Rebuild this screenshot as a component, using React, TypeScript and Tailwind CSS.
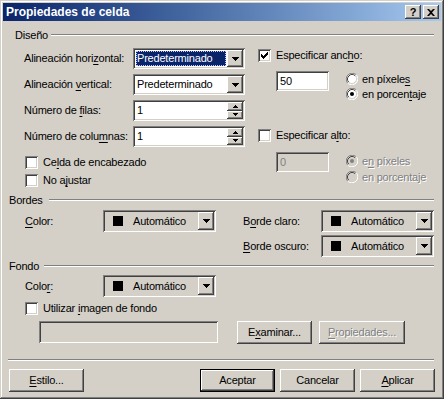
import React from "react";

const raised =
  "shadow-[inset_-1px_-1px_0_#404040,inset_1px_1px_0_#ffffff,inset_-2px_-2px_0_#808080,inset_2px_2px_0_#d4d0c8]";
const sunken =
  "shadow-[inset_1px_1px_0_#808080,inset_-1px_-1px_0_#ffffff,inset_2px_2px_0_#404040,inset_-2px_-2px_0_#d4d0c8]";
const dim = "text-[#808080] [text-shadow:1px_1px_0_#ffffff]";

const U: React.FC<{ children: React.ReactNode }> = ({ children }) => (
  <u className="underline underline-offset-[2px] decoration-1">{children}</u>
);

const ArrowBtn = () => (
  <div className={`w-[16px] h-full flex items-center justify-center bg-[#d4d0c8] ${raised}`}>
    <svg width="7" height="4" viewBox="0 0 7 4">
      <path d="M0 0h7v1H0zM1 1h5v1H1zM2 2h3v1H2zM3 3h1v1H3z" fill="#000" />
    </svg>
  </div>
);

const Select: React.FC<{ value: string; focused?: boolean }> = ({ value, focused }) => (
  <div className={`w-[112px] h-[21px] bg-white p-[2px] flex ${sunken}`}>
    <div
      className={`flex-1 flex items-center m-[1px] pl-[1px] ${
        focused ? "bg-[#0a246a] text-white outline-1 outline-dotted outline-[#c8c8ff] -outline-offset-1" : ""
      }`}
    >
      {value}
    </div>
    <ArrowBtn />
  </div>
);

const SpinArrow: React.FC<{ up?: boolean }> = ({ up }) => (
  <div className={`flex-1 flex items-center justify-center bg-[#d4d0c8] ${raised}`}>
    <svg width="5" height="3" viewBox="0 0 5 3">
      {up ? (
        <path d="M2 0h1v1H2zM1 1h3v1H1zM0 2h5v1H0z" fill="#000" />
      ) : (
        <path d="M0 0h5v1H0zM1 1h3v1H1zM2 2h1v1H2z" fill="#000" />
      )}
    </svg>
  </div>
);

const Spin: React.FC<{ value: string }> = ({ value }) => (
  <div className={`w-[112px] h-[21px] bg-white p-[2px] flex ${sunken}`}>
    <div className="flex-1 flex items-center pl-[2px]">{value}</div>
    <div className="w-[16px] flex flex-col">
      <SpinArrow up />
      <SpinArrow />
    </div>
  </div>
);

const ColorSelect = () => (
  <div className={`w-[113px] h-[22px] bg-[#d4d0c8] p-[2px] flex ${sunken}`}>
    <div className="flex-1 flex items-center">
      <div className="w-[10px] h-[10px] bg-black ml-[8px]" />
      <span className="ml-[10px]">Automático</span>
    </div>
    <ArrowBtn />
  </div>
);

const Check: React.FC<{ checked?: boolean }> = ({ checked }) => (
  <div className={`w-[13px] h-[13px] shrink-0 bg-white flex items-center justify-center ${sunken}`}>
    {checked && (
      <svg width="7" height="7" viewBox="0 0 7 7">
        <path d="M6 0h1v3H6zM5 1h1v3H5zM4 2h1v3H4zM3 3h1v3H3zM2 4h1v3H2zM1 3h1v3H1zM0 2h1v3H0z" fill="#000" />
      </svg>
    )}
  </div>
);

const Radio: React.FC<{ on?: boolean; disabled?: boolean }> = ({ on, disabled }) => (
  <svg width="12" height="12" viewBox="0 0 12 12" className="shrink-0">
    <circle cx="6" cy="6" r="5" fill={disabled ? "#d4d0c8" : "#ffffff"} />
    <path d="M1.76 10.24A6 6 0 0 1 10.24 1.76" stroke="#808080" strokeWidth="1" fill="none" transform="translate(0 0)" />
    <path d="M10.24 1.76A6 6 0 0 1 1.76 10.24" stroke="#ffffff" strokeWidth="1" fill="none" />
    <path d="M2.82 9.18A4.5 4.5 0 0 1 9.18 2.82" stroke="#404040" strokeWidth="1" fill="none" />
    <path d="M9.18 2.82A4.5 4.5 0 0 1 2.82 9.18" stroke="#d4d0c8" strokeWidth="1" fill="none" />
    {on && <circle cx="6" cy="6" r="2" fill={disabled ? "#808080" : "#000000"} />}
  </svg>
);

const Btn: React.FC<{ children: React.ReactNode; className?: string; def?: boolean; disabled?: boolean }> = ({
  children,
  className,
  def,
  disabled,
}) => (
  <div
    className={`h-[23px] flex items-center justify-center bg-[#d4d0c8] ${
      def ? "border border-black" : ""
    } ${raised} ${disabled ? dim : ""} ${className ?? ""}`}
  >
    {children}
  </div>
);

const GroupHead: React.FC<{ label: string; pad: string; gap: string }> = ({ label, pad, gap }) => (
  <div className={`h-[14px] flex items-center pr-[7px] ${pad}`}>
    <span>{label}</span>
    <div className={`flex-1 border-t border-b border-t-[#808080] border-b-white ${gap}`} />
  </div>
);

export default function App() {
  return (
    <div
      className={`w-[444px] h-[399px] bg-[#d4d0c8] p-[3px] flex flex-col font-['Liberation_Sans',Arial,sans-serif] text-[11px] tracking-[-0.2px] leading-none text-black select-none shadow-[inset_-1px_-1px_0_#404040,inset_1px_1px_0_#d4d0c8,inset_-2px_-2px_0_#808080,inset_2px_2px_0_#ffffff]`}
    >
      {/* title bar */}
      <div className="h-[18px] flex items-center justify-between pl-[3px] pr-[2px] bg-linear-to-r from-[#0a246a] to-[#a6caf0]">
        <span className="text-white font-bold text-[12px] tracking-normal">Propiedades de celda</span>
        <div className="flex gap-[2px]">
          <div className={`w-[16px] h-[14px] flex items-center justify-center bg-[#d4d0c8] font-bold text-[11px] ${raised}`}>
            ?
          </div>
          <div className={`w-[16px] h-[14px] flex items-center justify-center bg-[#d4d0c8] ${raised}`}>
            <svg width="8" height="7" viewBox="0 0 8 7">
              <path d="M0 0h2l2 2 2-2h2L5 3.5 8 7H6L4 5 2 7H0l3-3.5z" fill="#000" />
            </svg>
          </div>
        </div>
      </div>

      {/* Diseño */}
      <div className="mt-[7px]">
        <GroupHead label="Diseño" pad="pl-[12px]" gap="ml-[3px]" />
      </div>
      <div className="mt-[6px] pl-[21px] flex">
        <div className="w-[221px] flex flex-col">
          <div className="h-[21px] flex items-center">
            <span className="w-[109px]">
              Alineación hori<U>z</U>ontal:
            </span>
            <Select value="Predeterminado" focused />
          </div>
          <div className="mt-[5px] h-[21px] flex items-center">
            <span className="w-[109px]">
              Alineación <U>v</U>ertical:
            </span>
            <Select value="Predeterminado" />
          </div>
          <div className="mt-[5px] h-[21px] flex items-center">
            <span className="w-[109px]">
              Número de <U>f</U>ilas:
            </span>
            <Spin value="1" />
          </div>
          <div className="mt-[5px] h-[21px] flex items-center">
            <span className="w-[109px]">
              Número de colu<U>m</U>nas:
            </span>
            <Spin value="1" />
          </div>
          <div className="mt-[9px] h-[13px] pl-[1px] flex items-center">
            <Check />
            <span className="ml-[5px]">
              Ce<U>l</U>da de encabezado
            </span>
          </div>
          <div className="mt-[5px] h-[13px] pl-[1px] flex items-center">
            <Check />
            <span className="ml-[5px]">
              No a<U>j</U>ustar
            </span>
          </div>
        </div>

        <div className="ml-[13px] flex flex-col">
          <div className="mt-[1px] h-[13px] flex items-center">
            <Check checked />
            <span className="ml-[5px]">
              Especificar anc<U>h</U>o:
            </span>
          </div>
          <div className="mt-[9px] flex">
            <div className={`ml-[18px] w-[53px] h-[20px] bg-white flex items-center pl-[4px] ${sunken}`}>50</div>
            <div className="ml-[17px] mt-[2px] flex flex-col">
              <div className="h-[12px] flex items-center">
                <Radio />
                <span className="ml-[4px]">
                  en píxele<U>s</U>
                </span>
              </div>
              <div className="mt-[3px] h-[12px] flex items-center">
                <Radio on />
                <span className="ml-[4px]">
                  en porcen<U>t</U>aje
                </span>
              </div>
            </div>
          </div>
          <div className="mt-[29px] h-[13px] flex items-center">
            <Check />
            <span className="ml-[5px]">
              Especificar a<U>l</U>to:
            </span>
          </div>
          <div className="mt-[10px] flex">
            <div className={`ml-[18px] w-[53px] h-[20px] bg-[#d4d0c8] flex items-center pl-[4px] text-[#808080] ${sunken}`}>
              0
            </div>
            <div className={`ml-[17px] mt-[3px] flex flex-col ${dim}`}>
              <div className="h-[12px] flex items-center">
                <Radio on disabled />
                <span className="ml-[4px]">
                  e<U>n</U> píxeles
                </span>
              </div>
              <div className="mt-[4px] h-[12px] flex items-center">
                <Radio disabled />
                <span className="ml-[4px]">en porcentaje</span>
              </div>
            </div>
          </div>
        </div>
      </div>

      {/* Bordes */}
      <div className="mt-[6px]">
        <GroupHead label="Bordes" pad="pl-[6px]" gap="ml-[6px]" />
      </div>
      <div className="mt-[3px] pl-[22px] flex">
        <div className="h-[22px] flex items-center">
          <span className="w-[78px]">
            <U>C</U>olor:
          </span>
          <ColorSelect />
        </div>
        <div className="ml-[27px] flex flex-col">
          <div className="h-[22px] flex items-center">
            <span className="w-[78px]">
              B<U>o</U>rde claro:
            </span>
            <ColorSelect />
          </div>
          <div className="mt-[3px] h-[22px] flex items-center">
            <span className="w-[78px]">
              <U>B</U>orde oscuro:
            </span>
            <ColorSelect />
          </div>
        </div>
      </div>

      {/* Fondo */}
      <div className="mt-[2px]">
        <GroupHead label="Fondo" pad="pl-[6px]" gap="ml-[5px]" />
      </div>
      <div className="mt-[2px] pl-[22px] h-[22px] flex items-center">
        <span className="w-[78px]">
          Colo<U>r</U>:
        </span>
        <ColorSelect />
      </div>
      <div className="mt-[5px] pl-[22px] h-[13px] flex items-center">
        <Check />
        <span className="ml-[5px]">
          Utilizar <U>i</U>magen de fondo
        </span>
      </div>
      <div className="mt-[6px] pl-[36px] flex">
        <div className={`w-[179px] h-[22px] bg-[#d4d0c8] ${sunken}`} />
        <Btn className="ml-[19px] w-[75px] h-[22px]">
          E<U>x</U>aminar...
        </Btn>
        <Btn className="ml-[7px] w-[86px] h-[22px]" disabled>
          <U>P</U>ropiedades...
        </Btn>
      </div>

      <div className="mt-[15px] ml-[5px] mr-[7px] border-t border-b border-t-[#808080] border-b-white" />

      <div className="mt-[8px] pl-[6px] pr-[6px] flex justify-between">
        <Btn className="w-[75px]">
          <U>E</U>stilo...
        </Btn>
        <div className="flex gap-[5px]">
          <Btn className="w-[75px]" def>
            Aceptar
          </Btn>
          <Btn className="w-[75px]">Cancelar</Btn>
          <Btn className="w-[75px]">
            <U>A</U>plicar
          </Btn>
        </div>
      </div>
    </div>
  );
}
